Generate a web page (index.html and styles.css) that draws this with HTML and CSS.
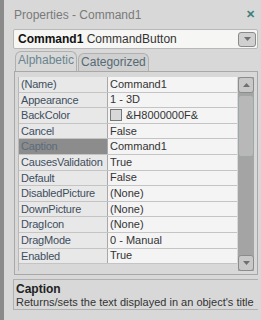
FILE: index.html
```html
<!DOCTYPE html>
<html lang="en">

<head>
	<meta charset="UTF-8">
	<meta name="viewport" content="width=device-width, initial-scale=1.0">
	<title>Properties - Command1</title>
	<link rel="stylesheet" href="styles.css">
</head>

<body>
	<div class="panel">
		<div class="title">
			<span>Properties - Command1</span>
			<span class="close">&#x2715;</span>
		</div>
		<div class="object-box">
			<span><b>Command1</b> CommandButton</span>
			<span class="drop"><svg width="7" height="4" viewBox="0 0 7 4"><path d="M0 0h7L3.5 4z" fill="#707070"/></svg></span>
		</div>
		<div class="tabs">
			<div class="tab active">Alphabetic</div>
			<div class="tab">Categorized</div>
		</div>
		<div class="grid">
			<div class="rows">
				<div class="row"><div class="name">(Name)</div><div class="value">Command1</div></div>
				<div class="row"><div class="name">Appearance</div><div class="value">1 - 3D</div></div>
				<div class="row"><div class="name">BackColor</div><div class="value"><span class="swatch"></span>&amp;H8000000F&amp;</div></div>
				<div class="row"><div class="name">Cancel</div><div class="value">False</div></div>
				<div class="row selected"><div class="name">Caption</div><div class="value">Command1</div></div>
				<div class="row"><div class="name">CausesValidation</div><div class="value">True</div></div>
				<div class="row"><div class="name">Default</div><div class="value">False</div></div>
				<div class="row"><div class="name">DisabledPicture</div><div class="value">(None)</div></div>
				<div class="row"><div class="name">DownPicture</div><div class="value">(None)</div></div>
				<div class="row"><div class="name">DragIcon</div><div class="value">(None)</div></div>
				<div class="row"><div class="name">DragMode</div><div class="value">0 - Manual</div></div>
				<div class="row"><div class="name">Enabled</div><div class="value">True</div></div>
			</div>
			<div class="scrollbar">
				<div class="sbtn"><svg width="7" height="4" viewBox="0 0 7 4"><path d="M0 4h7L3.5 0z" fill="#707070"/></svg></div>
				<div class="thumb"></div>
				<div class="track"></div>
				<div class="sbtn"><svg width="7" height="4" viewBox="0 0 7 4"><path d="M0 0h7L3.5 4z" fill="#707070"/></svg></div>
			</div>
		</div>
		<div class="desc">
			<div class="desc-title">Caption</div>
			<div>Returns/sets the text displayed in an object's title</div>
		</div>
	</div>
</body>

</html>
```

FILE: styles.css
```css
body {
	margin: 0;
	background-color: #8a8a8a;
	font-family: "Liberation Sans", Arial, sans-serif;
	font-size: 11px;
}

.panel {
	margin-left: 4px;
	height: 320px;
	background-color: #d8d8d8;
	padding: 0 3px 0 9px;
	box-sizing: border-box;
	overflow: hidden;
}

.title {
	display: flex;
	justify-content: space-between;
	align-items: center;
	height: 29px;
	padding: 0 0 0 1px;
	color: #7a7a7a;
	font-size: 12px;
}

.close {
	color: #3f7f7a;
	font-weight: bold;
	font-size: 11px;
	margin-right: 3px;
}

.object-box {
	display: flex;
	justify-content: space-between;
	align-items: center;
	height: 18px;
	background-color: #f6f6f4;
	border: 1px solid #b8b8b8;
	border-radius: 2px;
	padding: 0 1px 0 4px;
	color: #333;
	font-size: 12px;
}

.object-box b {
	color: #111;
}

.drop {
	display: flex;
	align-items: center;
	justify-content: center;
	width: 16px;
	height: 13px;
	background-color: #d0d0d0;
	border: 1px solid #8a8a8a;
	border-radius: 3px;
}

.tabs {
	display: flex;
	height: 19px;
	margin-top: 3px;
	padding-left: 2px;
	align-items: flex-end;
}

.tab {
	height: 17px;
	line-height: 17px;
	padding: 0 2px;
	border: 1px solid #b0b0b0;
	border-bottom: none;
	border-radius: 6px 6px 0 0;
	color: #556a73;
	font-size: 12px;
	background-color: #d0d0d0;
}

.tab.active {
	height: 19px;
	line-height: 17px;
	color: #6a8590;
	background-color: #d8d8d8;
	margin-right: 1px;
}

.grid {
	display: flex;
	height: 204px;
	border: 1px solid #a8a8a8;
	padding: 5px 3px 3px 3px;
	margin-left: 1px;
	box-sizing: border-box;
	gap: 1px;
}

.rows {
	flex: 1;
	border-left: 1px solid #b8b8b8;
}

.row {
	display: flex;
	height: 15.6px;
	line-height: 15px;
	box-sizing: border-box;
	border-bottom: 1px solid #c4c4c4;
	color: #3e4e5e;
	font-size: 11px;
	background-color: #f4f4f4;
}

.name {
	width: 86px;
	padding-left: 2px;
	border-right: 1px solid #a8a8a8;
	background-color: #e8e8e8;
	white-space: nowrap;
	overflow: hidden;
	letter-spacing: -0.2px;
}

.value {
	flex: 1;
	padding-left: 2px;
	color: #333;
	white-space: nowrap;
	display: flex;
	align-items: center;
}

.row.selected .name {
	background-color: #8c8c8c;
	color: #5b6b7b;
}

.swatch {
	display: inline-block;
	width: 10px;
	height: 10px;
	background-color: #d8d8d8;
	border: 1px solid #777;
	margin-right: 4px;
}

.scrollbar {
	width: 16px;
	display: flex;
	flex-direction: column;
	background-color: #a4a4a4;
}

.sbtn {
	height: 14px;
	display: flex;
	align-items: center;
	justify-content: center;
	background-color: #c8c8c8;
	border: 1px solid #8c8c8c;
	border-radius: 3px;
}

.thumb {
	height: 60px;
	margin: 2px 0 0;
	background-color: #b8b8b8;
	border: 1px solid #9aa8a8;
	border-radius: 3px;
}

.track {
	flex: 1;
}

.desc {
	margin-top: 4px;
	height: 31px;
	border: 1px solid #b0b0b0;
	border-right: none;
	padding: 3px 0 0 2px;
	box-sizing: border-box;
	color: #333;
	font-size: 11px;
	line-height: 13px;
	white-space: nowrap;
}

.desc-title {
	font-weight: bold;
	color: #222;
	font-size: 12px;
}
```
